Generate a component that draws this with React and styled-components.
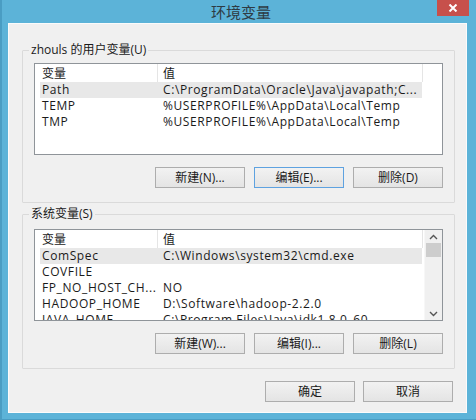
import React from "react";
import styled, { createGlobalStyle } from "styled-components";

const GlobalStyle = createGlobalStyle`
  html, body {
    margin: 0;
    padding: 0;
    background: #ffffff;
  }
  body {
    font-family: "Open Sans", "Noto Sans CJK SC", sans-serif;
  }
`;

const Window = styled.div`
  width: 476px;
  height: 420px;
  box-sizing: border-box;
  background: #5cb3d8;
  border-left: 2px solid #4a9dc3;
  border-bottom: 1px solid #4a9dc3;
  display: flex;
  flex-direction: column;
  position: relative;
`;

const TitleBar = styled.div`
  height: 23px;
  display: flex;
  align-items: center;
  justify-content: center;
  padding-left: 4px;
`;

const Title = styled.div`
  font-family: "Noto Sans CJK SC", sans-serif;
  font-size: 15px;
  color: #2e3b44;
  line-height: 23px;
`;

const CloseButton = styled.div`
  position: absolute;
  top: 0;
  right: 7px;
  width: 32px;
  height: 16px;
  background: #c7504b;
  display: flex;
  align-items: center;
  justify-content: center;
`;

const Client = styled.div`
  flex: 1;
  margin: 0 9px 6px 6px;
  background: #f0f0f0;
  border: 1px solid #fbfbfb;
  padding: 18px 11px 0 13px;
  display: flex;
  flex-direction: column;
`;

const Group = styled.fieldset`
  margin: 0 0 ${(p) => p.$gap || 0}px 0;
  padding: 0;
  min-width: 0;
  border: 1px solid #dadada;
  border-radius: 1px;
`;

const Legend = styled.legend`
  margin-left: 6px;
  padding: 0 2px;
  font-size: 12px;
  line-height: 16px;
  color: #1a1a1a;
`;

const GroupBody = styled.div`
  padding: ${(p) => p.$top}px 11px 14px 11px;
  display: flex;
  flex-direction: column;
`;

const List = styled.div`
  height: 92px;
  box-sizing: border-box;
  border: 1px solid #8f9499;
  background: #ffffff;
  display: flex;
  overflow: hidden;
`;

const ListMain = styled.div`
  flex: 1;
  display: flex;
  flex-direction: column;
  min-width: 0;
`;

const Header = styled.div`
  height: 18px;
  display: flex;
  font-size: 12px;
  color: #1a1a1a;
`;

const HeaderCell = styled.div`
  width: ${(p) => (p.$w ? `${p.$w}px` : "auto")};
  flex: ${(p) => (p.$w ? "none" : 1)};
  box-sizing: border-box;
  padding-left: ${(p) => p.$pad}px;
  border-right: ${(p) => (p.$w ? "1px solid #e5e5e5" : "none")};
  line-height: 18px;
  font-family: "Noto Sans CJK SC", sans-serif;
`;

const Row = styled.div`
  height: 16px;
  margin-left: 5px;
  width: 382px;
  display: flex;
  background: ${(p) => (p.$selected ? "#e8e8e8" : "transparent")};
  font-size: 12px;
  letter-spacing: 0.6px;
  line-height: 16px;
  color: #1a1a1a;
  flex-shrink: 0;
`;

const NameCell = styled.div`
  width: 117px;
  padding-left: 2px;
  box-sizing: border-box;
  white-space: nowrap;
  overflow: hidden;
`;

const ValueCell = styled.div`
  flex: 1;
  padding-left: 6px;
  white-space: nowrap;
  overflow: hidden;
`;

const ScrollBar = styled.div`
  width: 17px;
  background: #f0f0f0;
  border-left: 1px solid #f7f7f7;
  display: flex;
  flex-direction: column;
  align-items: center;
`;

const ArrowBox = styled.div`
  height: 13px;
  width: 100%;
  display: flex;
  align-items: center;
  justify-content: center;
`;

const Thumb = styled.div`
  width: 15px;
  height: 14px;
  background: #cdcdcd;
`;

const Track = styled.div`
  flex: 1;
`;

const ButtonRow = styled.div`
  display: flex;
  justify-content: flex-end;
  gap: ${(p) => p.$gap || 9}px;
  margin-top: ${(p) => p.$top || 12}px;
  padding-right: ${(p) => p.$right || 0}px;
`;

const Button = styled.button`
  width: 90px;
  height: 21px;
  box-sizing: border-box;
  border: 1px solid ${(p) => (p.$focused ? "#5ea2e0" : "#adadad")};
  background: linear-gradient(#f2f2f2, #e4e4e4);
  font-family: "Open Sans", "Noto Sans CJK SC", sans-serif;
  font-size: 12px;
  color: #1a1a1a;
  padding: 0;
  line-height: 19px;
  border-radius: 0;
`;

const Chevron = ({ up }) => (
  <svg width="9" height="6" viewBox="0 0 9 6">
    <polyline
      points={up ? "1,5 4.5,1.5 8,5" : "1,1 4.5,4.5 8,1"}
      fill="none"
      stroke="#555"
      strokeWidth="1.4"
    />
  </svg>
);

const userVars = [
  ["Path", "C:\\ProgramData\\Oracle\\Java\\javapath;C..."],
  ["TEMP", "%USERPROFILE%\\AppData\\Local\\Temp"],
  ["TMP", "%USERPROFILE%\\AppData\\Local\\Temp"],
];

const systemVars = [
  ["ComSpec", "C:\\Windows\\system32\\cmd.exe"],
  ["COVFILE", ""],
  ["FP_NO_HOST_CH...", "NO"],
  ["HADOOP_HOME", "D:\\Software\\hadoop-2.2.0"],
  ["JAVA_HOME", "C:\\Program Files\\Java\\jdk1.8.0_60"],
];

function VarList({ rows, scroll }) {
  return (
    <List>
      <ListMain>
        <Header>
          <HeaderCell $w={123} $pad={7}>变量</HeaderCell>
          <HeaderCell $w={265} $pad={5}>值</HeaderCell>
          {!scroll && <HeaderCell $pad={0} />}
        </Header>
        {rows.map(([name, value], i) => (
          <Row key={name} $selected={i === 0}>
            <NameCell>{name}</NameCell>
            <ValueCell>{value}</ValueCell>
          </Row>
        ))}
      </ListMain>
      {scroll && (
        <ScrollBar>
          <ArrowBox>
            <Chevron up />
          </ArrowBox>
          <Thumb />
          <Track />
          <ArrowBox>
            <Chevron />
          </ArrowBox>
        </ScrollBar>
      )}
    </List>
  );
}

export default function App() {
  return (
    <>
      <GlobalStyle />
      <Window>
        <TitleBar>
          <Title>环境变量</Title>
          <CloseButton>
            <svg width="10" height="8" viewBox="0 0 10 8">
              <path d="M1.5 0.5 L8.5 7.5 M8.5 0.5 L1.5 7.5" stroke="#fff" strokeWidth="2" />
            </svg>
          </CloseButton>
        </TitleBar>
        <Client>
          <Group $gap={3}>
            <Legend>zhouls 的用户变量(U)</Legend>
            <GroupBody $top={5}>
              <VarList rows={userVars} />
              <ButtonRow>
                <Button>新建(N)...</Button>
                <Button $focused>编辑(E)...</Button>
                <Button>删除(D)</Button>
              </ButtonRow>
            </GroupBody>
          </Group>
          <Group>
            <Legend>系统变量(S)</Legend>
            <GroupBody $top={7}>
              <VarList rows={systemVars} scroll />
              <ButtonRow>
                <Button>新建(W)...</Button>
                <Button>编辑(I)...</Button>
                <Button>删除(L)</Button>
              </ButtonRow>
            </GroupBody>
          </Group>
          <ButtonRow $gap={8} $top={12} $right={2}>
            <Button>确定</Button>
            <Button>取消</Button>
          </ButtonRow>
        </Client>
      </Window>
    </>
  );
}
